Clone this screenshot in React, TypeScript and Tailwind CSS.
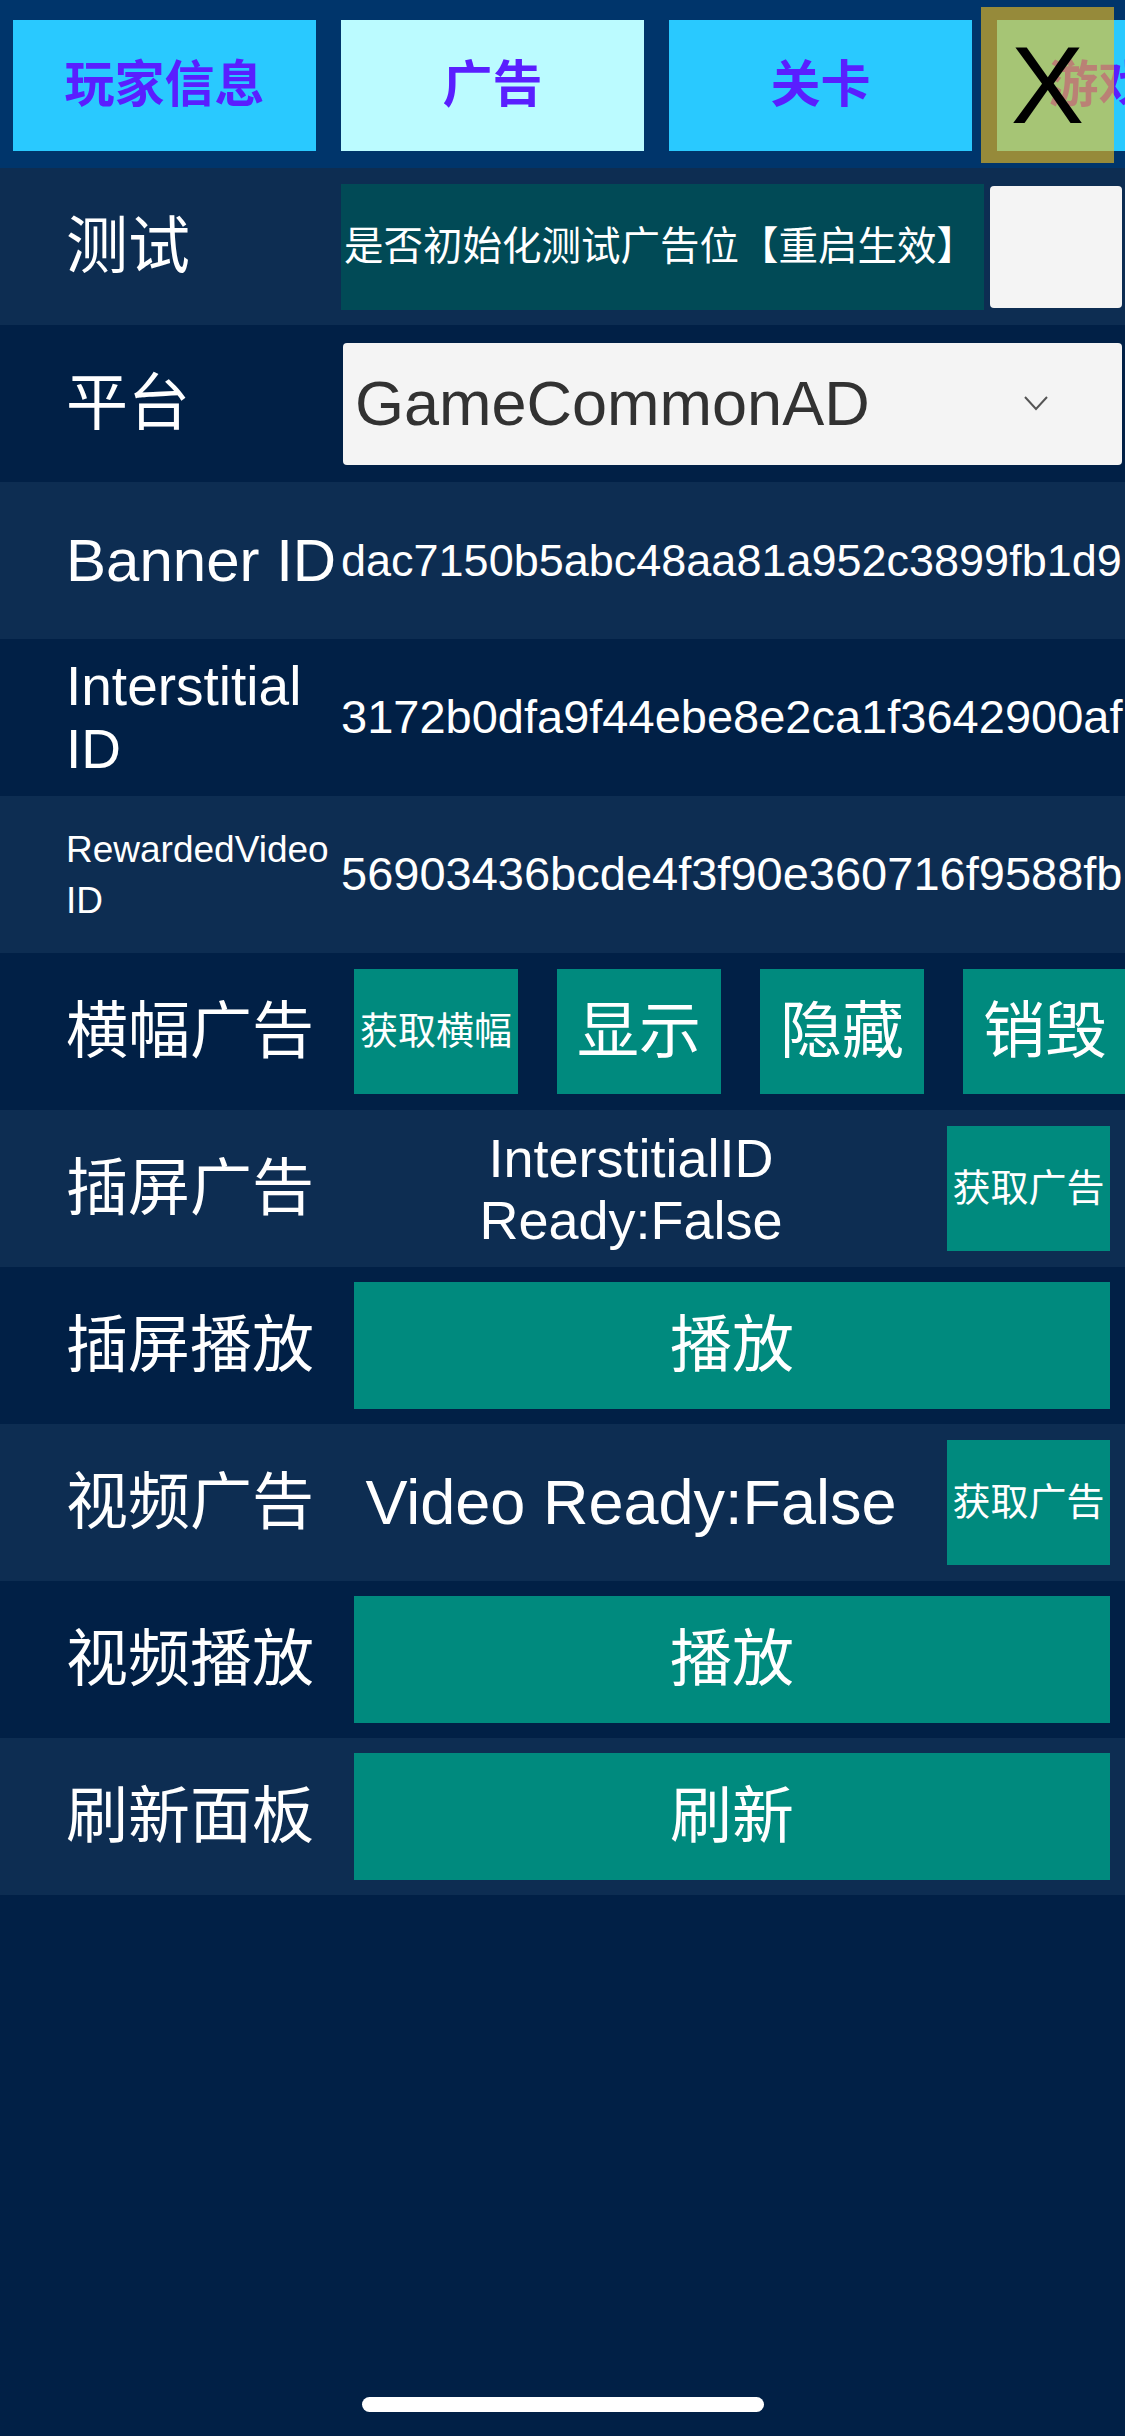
import clsx from "clsx"
import type { ReactNode } from "react"

const FONT = { fontFamily: '"Liberation Sans", "Noto Sans CJK SC", sans-serif' }

function Row({
  label,
  dark,
  children,
  labelClass = "text-[62px]",
}: {
  label: ReactNode
  dark?: boolean
  children?: ReactNode
  labelClass?: string
}) {
  return (
    <div className={clsx("flex h-[157px] items-center", dark ? "bg-[#012046]" : "bg-[#0d2d52]")}>
      <div className={clsx("w-[341px] shrink-0 pl-[66px] text-white whitespace-nowrap", labelClass)}>{label}</div>
      <div className="flex min-w-0 flex-1 items-center">{children}</div>
    </div>
  )
}

function TealButton({ children, className }: { children: ReactNode; className?: string }) {
  return (
    <div className={clsx("flex shrink-0 items-center justify-center bg-[#008a7e] text-white whitespace-nowrap", className)}>
      {children}
    </div>
  )
}

export default function App() {
  const tabs = [
    { name: "玩家信息", active: false },
    { name: "广告", active: true },
    { name: "关卡", active: false },
    { name: "游戏设置", active: false },
  ]

  return (
    <div className="relative min-h-[2436px] w-[1125px] overflow-hidden bg-[#012046]" style={FONT}>
      {/* tab bar */}
      <div className="flex h-[168px] items-start gap-[25px] bg-[#00356b] pl-[13px] pt-[20px]">
        {tabs.map((t) => (
          <div
            key={t.name}
            className={clsx(
              "flex h-[131px] w-[303px] shrink-0 items-center justify-center text-[50px] font-bold text-[#5a1eff]",
              t.active ? "bg-[#bbfbff]" : "bg-[#29c9ff]"
            )}
          >
            {t.name}
          </div>
        ))}
      </div>

      {/* close button over the last tab */}
      <div className="absolute left-[981px] top-[7px] flex h-[156px] w-[133px] items-center justify-center bg-[rgba(250,195,25,0.6)]">
        <span className="text-[110px] leading-none text-black">X</span>
      </div>

      <Row label="测试">
        <div className="flex h-[126px] w-[643px] shrink-0 items-center bg-[#014a56] pl-[3px] text-[39.5px] text-white whitespace-nowrap">
          是否初始化测试广告位【重启生效】
        </div>
        <div className="ml-[6px] h-[122px] w-[132px] shrink-0 rounded-[4px] bg-[#f4f4f4]" />
      </Row>

      <Row label="平台" dark>
        <div className="ml-[2px] flex h-[122px] w-[779px] shrink-0 items-center justify-between rounded-[4px] bg-[#f4f4f4] pl-[12px] pr-[74px]">
          <span className="text-[63px] text-[#323232]">GameCommonAD</span>
          <svg width="24" height="15" viewBox="0 0 24 15" fill="none">
            <path d="M1 1 L12 13 L23 1" stroke="#555" strokeWidth="2" />
          </svg>
        </div>
      </Row>

      <Row label="Banner ID" labelClass="text-[60px]">
        <span className="text-[45px] text-white whitespace-nowrap">dac7150b5abc48aa81a952c3899fb1d9</span>
      </Row>

      <Row
        dark
        labelClass="text-[55px] leading-[63px]"
        label={
          <>
            Interstitial
            <br />
            ID
          </>
        }
      >
        <span className="text-[47px] text-white whitespace-nowrap">3172b0dfa9f44ebe8e2ca1f3642900af</span>
      </Row>

      <Row
        labelClass="text-[37px] leading-[51px]"
        label={
          <>
            RewardedVideo
            <br />
            ID
          </>
        }
      >
        <span className="text-[47px] text-white whitespace-nowrap">56903436bcde4f3f90e360716f9588fb</span>
      </Row>

      <Row label="横幅广告" dark>
        <div className="ml-[13px] flex gap-[39px]">
          <TealButton className="h-[125px] w-[164px] text-[38px]">获取横幅</TealButton>
          <TealButton className="h-[125px] w-[164px] text-[62px]">显示</TealButton>
          <TealButton className="h-[125px] w-[164px] text-[62px]">隐藏</TealButton>
          <TealButton className="h-[125px] w-[164px] text-[62px]">销毁</TealButton>
        </div>
      </Row>

      <Row label="插屏广告">
        <div className="ml-[13px] w-[554px] shrink-0 text-center text-[54px] leading-[62px] text-white">
          InterstitialID
          <br />
          Ready:False
        </div>
        <TealButton className="ml-[39px] h-[125px] w-[163px] text-[38px]">获取广告</TealButton>
      </Row>

      <Row label="插屏播放" dark>
        <TealButton className="ml-[13px] h-[127px] w-[756px] text-[62px]">播放</TealButton>
      </Row>

      <Row label="视频广告">
        <div className="ml-[13px] w-[554px] shrink-0 text-center text-[63px] text-white whitespace-nowrap">
          Video Ready:False
        </div>
        <TealButton className="ml-[39px] h-[125px] w-[163px] text-[38px]">获取广告</TealButton>
      </Row>

      <Row label="视频播放" dark>
        <TealButton className="ml-[13px] h-[127px] w-[756px] text-[62px]">播放</TealButton>
      </Row>

      <Row label="刷新面板">
        <TealButton className="ml-[13px] h-[127px] w-[756px] text-[62px]">刷新</TealButton>
      </Row>

      {/* home indicator */}
      <div className="absolute bottom-[24px] left-[362px] h-[15px] w-[402px] rounded-full bg-white" />
    </div>
  )
}
